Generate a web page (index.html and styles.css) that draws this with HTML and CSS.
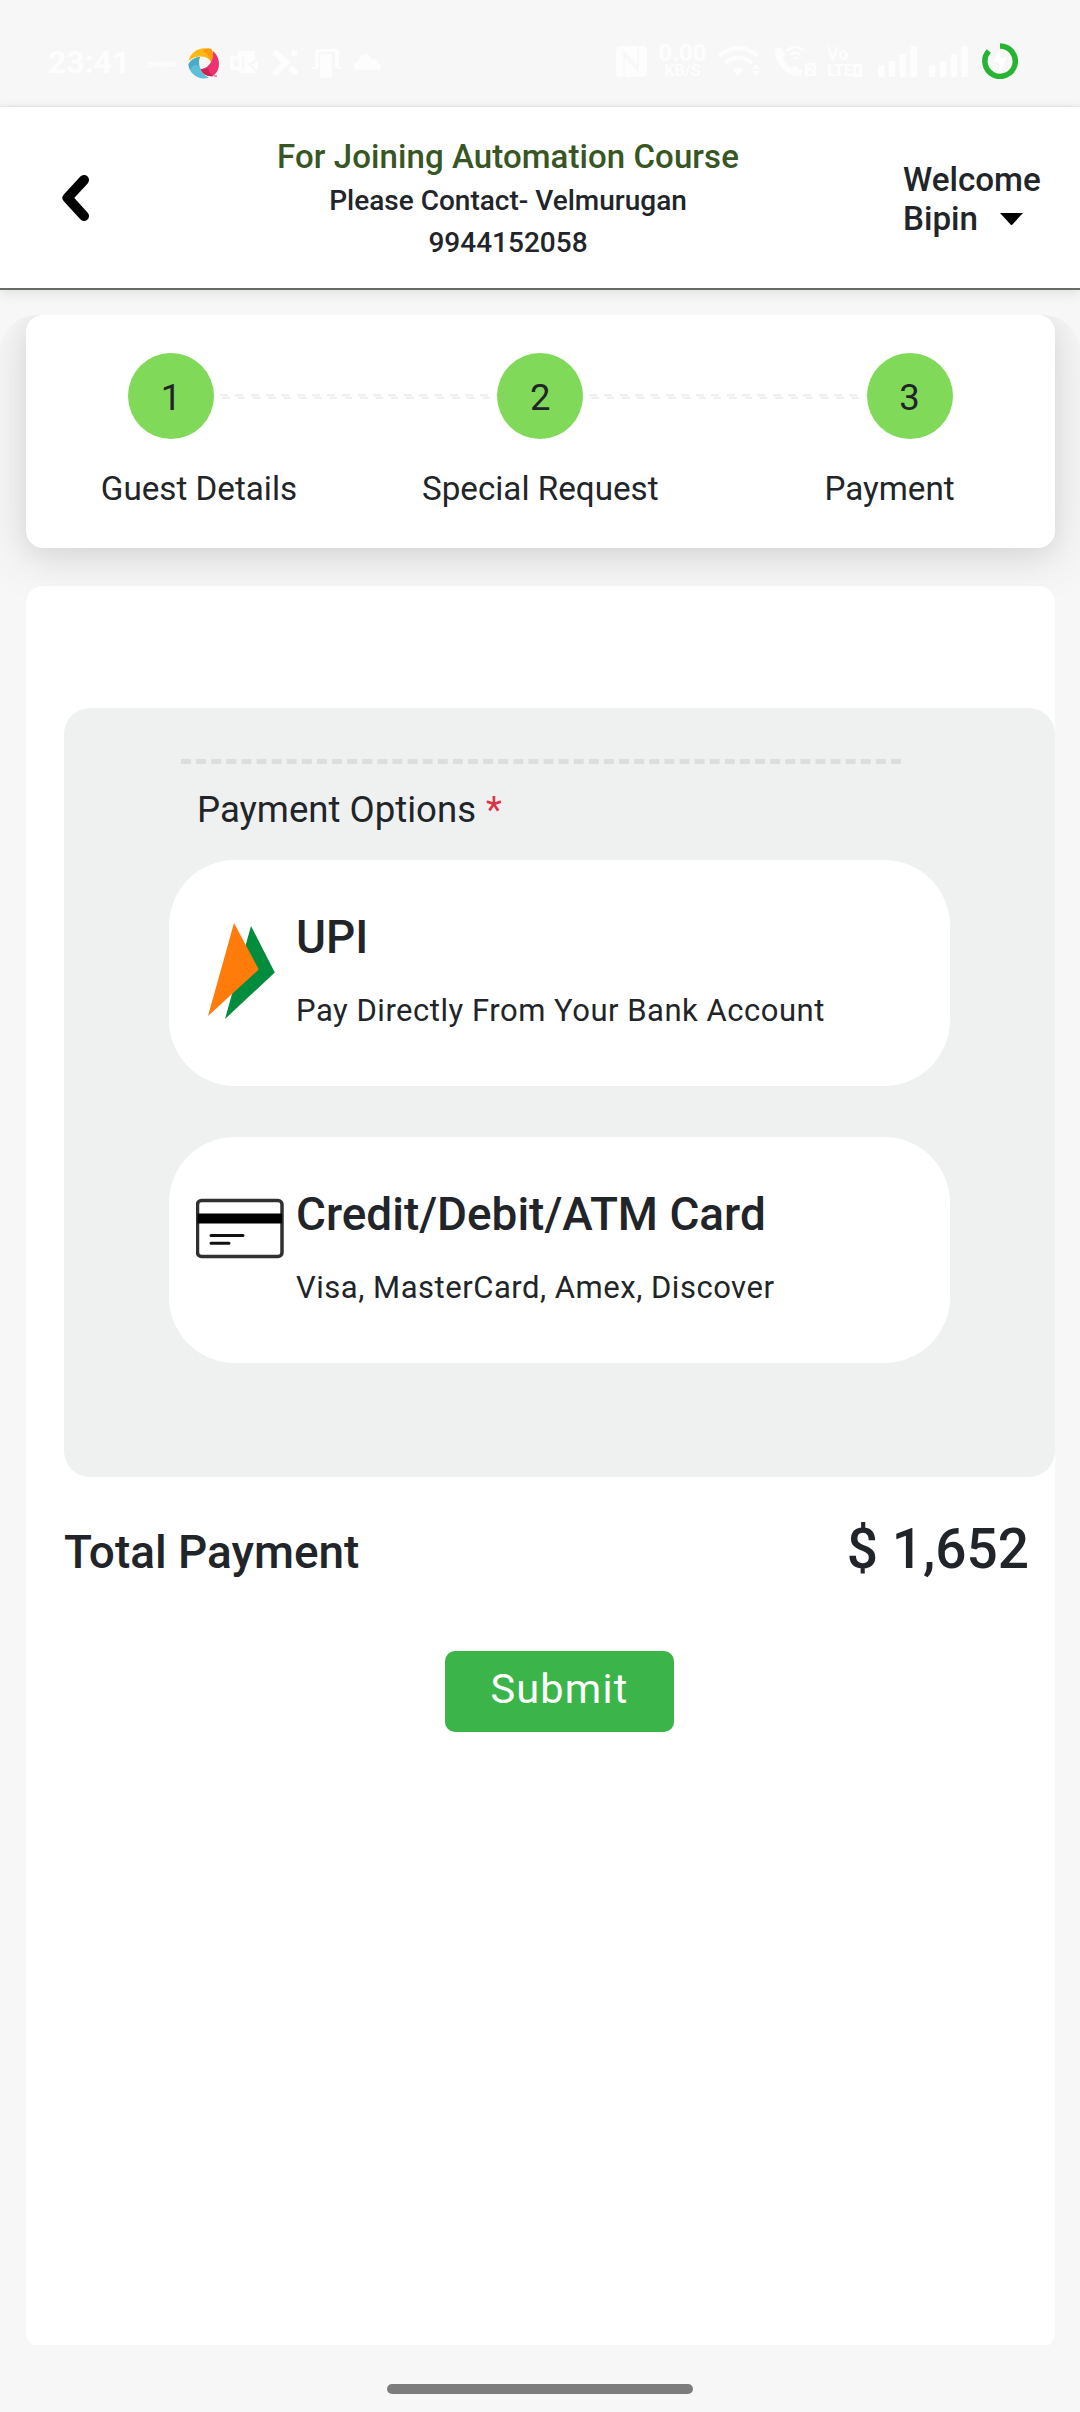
FILE: index.html
```html
<!DOCTYPE html>
<html lang="en">
<head>
<meta charset="utf-8">
<title>Payment</title>
<link rel="stylesheet" href="styles.css">
</head>
<body>
<div class="status-bar">
  <div class="status-left">
    <span class="clock">23:41</span>
    <span class="zomato">zomato</span>
    <svg class="swirl" width="32" height="32" viewBox="0 0 32 32">
      <path d="M0.5 14C3 4 12 -1 23 2C26 5 25 11 23 15C19 8 8 8 0.5 14Z" fill="#fdb913"/>
      <path d="M14 4C18 1 21 1 23 2C26 5 25 11 23 15C22 10 19 6 14 4Z" fill="#fd9a08"/>
      <path d="M25 4C33 11 33 23 25 29C20 30 14 27 12 22C20 22 26 14 25 4Z" fill="#ee3170"/>
      <path d="M12 22C16 23 19 22 20 21C21 25 23 28 25 29C20 30 14 27 12 22Z" fill="#cf1f4c"/>
      <path d="M12 10C9 18 14 28 21 30.500C11 34 1 27 0.500 17C4 12 8 10 12 10Z" fill="#5cbfd8"/>
      <path d="M12 10C10 13 10.500 18 11 20C7 16 4 19 2 23C1 21 0.500 19 0.500 17C4 12 8 10 12 10Z" fill="#49abc4"/>
      <path d="M26 29h3" stroke="#ee3170" stroke-width="1"/>
    </svg>
    <svg class="outlook" width="28" height="23" viewBox="0 0 28 23" fill="#fdfdfd">
      <path d="M8 0H25V9L18 13L27 22H10L8 19H14V5H8Z"/><path d="M28 10V20L21 14Z"/>
      <path fill-rule="evenodd" d="M0 5H12V19H0ZM6 8a3 4 0 1 0 .1 0Z"/>
    </svg>
    <svg class="cross" width="27" height="27" viewBox="0 0 27 27" stroke="#fdfdfd" stroke-width="6" stroke-linecap="round" fill="none">
      <path d="M4 4L14 13.500L4 23M20 20L23 23M22 4h.5"/>
    </svg>
    <svg class="device" width="30" height="29" viewBox="0 0 30 29" fill="#fdfdfd">
      <path d="M3 0H27V18H23V3H7V18H3ZM0 18H6V20H0ZM24 18H30V20H24Z"/><path d="M8 7a2 2 0 0 1 2-2H18a2 2 0 0 1 2 2V27a2 2 0 0 1-2 2H10a2 2 0 0 1-2-2Z"/>
    </svg>
    <svg class="cloud" width="28" height="16" viewBox="0 0 28 16" fill="#fdfdfd">
      <path d="M5 16C-1 16-1 8 5 8C6-1 16-2 19 5C23 4 25 7 24.500 9C29 10 29 16 25 16Z"/>
    </svg>
  </div>
  <div class="status-right">
    <svg class="nfc" width="31" height="31" viewBox="0 0 31 31">
      <rect width="31" height="31" rx="4" fill="#fdfdfd"/>
      <path d="M8 31V6L22 22V8M22 0V25L8 9" fill="none" stroke="#f7f7f7" stroke-width="1.500"/>
    </svg>
    <div class="speed"><span class="speed-value">0.00</span><span class="speed-unit">KB/S</span></div>
    <svg class="wifi" width="43" height="31" viewBox="0 0 43 31" fill="none" stroke="#fdfdfd" stroke-width="4">
      <path d="M1 10Q20-6 40 10M7 17Q20 6 34 17"/><path d="M14.500 24Q20 20 26 24L20 30Z" fill="#fdfdfd" stroke="none"/><path d="M34 23l4-5 4 5ZM34 25l4 5 4-5Z" fill="#fdfdfd" stroke="none"/>
    </svg>
    <svg class="call" width="41" height="31" viewBox="0 0 41 31" fill="none" stroke="#fdfdfd" stroke-width="2.500">
      <path d="M1 3L6 1L10 9L8 13Q11 19 16 22L20 20L28 25L25 30C12 31 0 17 0 5Z" fill="#fdfdfd" stroke="none"/>
      <path d="M12 5Q20-3 29 5M15.500 9Q20 4 25 9"/><path d="M17 11h7l-3.500 3Z" fill="#fdfdfd" stroke="none"/>
      <rect x="30" y="17" width="11" height="13" rx="2" fill="#fdfdfd" stroke="none"/>
      <path d="M33 21q3-2 5 0q0 2-4.500 6h5" stroke="#f7f7f7" stroke-width="1.500"/>
    </svg>
    <div class="volte"><span>Vo</span><span class="lte">LTE<i></i></span></div>
    <svg class="signal" width="39" height="31" viewBox="0 0 39 31" fill="#fdfdfd"><rect y="19" width="6.500" height="12" rx="1.500"/><rect x="10.800" y="15" width="6.500" height="16" rx="1.500"/><rect x="21.600" y="8" width="6.500" height="23" rx="1.500"/><rect x="32.400" width="6.500" height="31" rx="1.500"/></svg>
    <svg class="signal" width="39" height="31" viewBox="0 0 39 31" fill="#fdfdfd"><rect y="19" width="6.500" height="12" rx="1.500"/><rect x="10.800" y="15" width="6.500" height="16" rx="1.500"/><rect x="21.600" y="8" width="6.500" height="23" rx="1.500"/><rect x="32.400" width="6.500" height="31" rx="1.500"/></svg>
    <svg class="battery" width="36" height="36" viewBox="0 0 36 36">
      <path d="M18 3A15.200 15.200 0 1 1 6.800 8" fill="none" stroke="#25b433" stroke-width="5.500"/>
      <path d="M18 5L11.500 19H16.500L18 30L24.500 15H18Z" fill="#fff"/>
    </svg>
  </div>
</div>

<header class="header">
  <svg class="back" width="27" height="46" viewBox="0 0 27 46"><path d="M22 5L5.500 22.800L22 41" fill="none" stroke="#000" stroke-width="10" stroke-linecap="round" stroke-linejoin="round"/></svg>
  <div class="contact">
    <div class="contact-title">For Joining Automation Course</div>
    <div class="contact-line">Please Contact- Velmurugan</div>
    <div class="contact-line">9944152058</div>
  </div>
  <div class="user">
    <span>Welcome</span>
    <div class="user-name"><span>Bipin</span><svg width="23" height="12" viewBox="0 0 23 12"><path d="M0 0H23L11.500 12.500Z"/></svg></div>
  </div>
</header>

<main class="page">
  <section class="steps">
    <div class="step first"><div class="step-dot">1</div><div class="step-label">Guest Details</div></div>
    <div class="step-link"></div>
    <div class="step"><div class="step-dot">2</div><div class="step-label">Special Request</div></div>
    <div class="step-link"></div>
    <div class="step last"><div class="step-dot">3</div><div class="step-label">Payment</div></div>
  </section>

  <section class="content">
    <div class="panel">
      <svg class="rule" width="720" height="5"><path d="M0 2.500H720" stroke="#ddd" stroke-width="5" stroke-dasharray="10 5.106"/></svg>
      <div class="panel-title">Payment Options <span class="required">*</span></div>
      <div class="option">
        <svg class="option-icon" width="88" height="100" viewBox="0 0 88 100">
          <path d="M54 7L77.800 53.500L28 100Z" fill="#028c3e"/><path d="M37 4L61.800 50.500L11 97Z" fill="#ff7c0a"/>
        </svg>
        <div><div class="option-name">UPI</div><div class="option-note">Pay Directly From Your Bank Account</div></div>
      </div>
      <div class="option">
        <svg class="option-icon wide" width="88" height="100" viewBox="0 0 88 100">
          <rect x="1.500" y="4.500" width="84.500" height="56" rx="4" fill="#fff" stroke="#303030" stroke-width="3.500"/>
          <path d="M1.500 22.500H86" stroke="#000" stroke-width="10"/><path d="M15 39.500H47M15 47.200H33" stroke="#111" stroke-width="3" stroke-linecap="round"/>
        </svg>
        <div><div class="option-name">Credit/Debit/ATM Card</div><div class="option-note">Visa, MasterCard, Amex, Discover</div></div>
      </div>
    </div>
    <div class="total"><span class="total-label">Total Payment</span><span class="total-value">$ 1,652</span></div>
    <button class="submit">Submit</button>
  </section>
</main>
<div class="nav-bar"><div class="nav-handle"></div></div>
</body>
</html>
```
FILE: styles.css
```css
* { box-sizing: border-box; }
body {
  margin: 0;
  width: 1080px;
  height: 2412px;
  overflow: hidden;
  display: flex;
  flex-direction: column;
  background: #f7f7f7;
  color: #212529;
  font-family: Roboto, "Liberation Sans", sans-serif;
}
svg { display: block; flex: none; }

.status-bar {
  height: 107px;
  flex: none;
  display: flex;
  justify-content: space-between;
  padding: 0 62px 0 48px;
  color: #fdfdfd;
  box-shadow: inset 0 -3px 3px -2px rgba(0, 0, 0, .06);
}
.status-left, .status-right { display: flex; align-items: flex-start; }
.clock { font-size: 32px; font-weight: 700; line-height: 38px; padding-top: 43px; width: 100px; }
.zomato { font-size: 9px; font-weight: 900; font-style: italic; line-height: 12px; padding-top: 58px; width: 40px; }
.swirl { margin: 47px 10px 0 0; }
.outlook { margin: 51px 14px 0 0; }
.cross { margin: 49px 13px 0 0; }
.device { margin: 49px 11px 0 0; }
.cloud { margin-top: 54px; }
.nfc { margin: 46px 9px 0 0; }
.speed { display: flex; flex-direction: column; align-items: center; width: 53px; padding-top: 42px; margin-right: 9px; }
.speed-value { font-size: 24px; font-weight: 700; line-height: 22px; }
.speed-unit { font-size: 16px; font-weight: 700; line-height: 14px; }
.wifi { margin: 46px 14px 0 0; }
.call { margin: 46px 11px 0 0; }
.volte { display: flex; flex-direction: column; width: 40px; padding-top: 45px; margin-right: 11px; font-size: 18px; font-weight: 700; line-height: 17px; }
.lte { display: flex; align-items: center; font-size: 17px; letter-spacing: -.5px; }
.lte i { width: 9px; height: 13px; border: 3px solid #fdfdfd; }
.signal { margin: 46px 12px 0 0; }
.battery { margin: 43px 0 0 2px; }

.header {
  height: 183px;
  flex: none;
  display: flex;
  background: #fff;
  border-bottom: 2px solid #666b66;
  box-shadow: 0 3px 12px rgba(0, 0, 0, .1);
}
.back { margin: 68px 0 0 62px; }
.contact { flex: none; width: 840px; margin-left: -1px; padding-top: 30px; text-align: center; font-weight: 500; }
.contact-title { margin-bottom: 3px; font-size: 33px; line-height: 40px; letter-spacing: .08px; color: #375623; }
.contact-line { font-size: 28px; line-height: 42px; }
.user { font-size: 33.200px; font-weight: 500; line-height: 39px; padding-top: 53px; margin-left: -25px; flex: none; }
.user-name { display: flex; align-items: center; }
.user-name svg { margin-left: 22px; }

.page {
  margin-top: 25px;
  height: 2030px;
  flex: none;
  padding: 0 25px 0 26px;
  border-radius: 37px 37px 0 0;
  overflow: hidden;
}
.steps {
  height: 233px;
  display: flex;
  justify-content: space-between;
  padding: 38px 102.500px 0 102px;
  border-radius: 17px;
  background: #fff;
  box-shadow: 0 6px 22px rgba(0, 0, 0, .05), 0 8px 50px 6px rgba(0, 0, 0, .1);
}
.step { width: 86px; display: flex; flex-direction: column; align-items: center; flex: none; }
.step-dot { width: 86px; height: 86px; padding-top: 4px; border-radius: 50%; background: #81d959; display: grid; place-items: center; font-size: 36.500px; line-height: 42px; }
.step-label { margin-top: 30px; font-size: 33.200px; line-height: 40px; white-space: nowrap; }
.first .step-label { margin-right: -56px; }
.last .step-label { margin-left: -40px; }
.step-link {
  flex: 1;
  height: 5px;
  margin: 41px 0 0 6px;
  background:
    repeating-linear-gradient(90deg, #eff1f0 0 8px, transparent 8px 15.310px) 0 0 / 100% 2.500px no-repeat,
    repeating-linear-gradient(90deg, transparent 0 2.500px, #eff1f0 2.500px 10px, transparent 10px 15.310px) 0 100% / 100% 2.500px no-repeat;
}
.content {
  margin-top: 38px;
  height: 1763px;
  padding: 122px 0 0 38px;
  border-radius: 17px;
  background: #fff;
  position: relative;
}
.panel { height: 769px; padding: 51px 105px 0; border-radius: 26px; background: #eff1f0; }
.rule { margin-left: 12px; }
.panel-title { margin: 24px 0 0 28px; font-size: 36.600px; line-height: 44px; height: 72px; }
.required { margin-left: 1px; color: #dc3545; }
.option { height: 226px; display: flex; padding: 59px 0 0 28px; margin-bottom: 51px; border-radius: 66px; background: #fff; }
.option-icon { margin-right: 11px; }
.option-icon.wide { margin: 0 12px 0 -1px; }
.option-name { font-size: 45.900px; font-weight: 500; line-height: 54px; margin-top: -9px; }
.option-note { font-size: 31px; line-height: 36px; letter-spacing: .52px; margin-top: 29px; }
.total { display: flex; justify-content: space-between; align-items: baseline; padding: 39px 26px 0 0; font-weight: 500; height: 174px; }
.total-label { font-size: 45.900px; line-height: 54px; }
.total-value { font-size: 55px; line-height: 66px; }
.submit { display: block; margin: 0 auto; width: 229px; height: 81px; padding: 0 0 6px; border: 0; border-radius: 10px; background: #3bb54a; color: #fff; font: 400 41.500px/48px Roboto, "Liberation Sans", sans-serif; letter-spacing: 1.200px; }
.nav-bar { height: 67px; flex: none; display: flex; justify-content: center; padding-top: 39px; background: #f7f7f7; }
.nav-handle { width: 306px; height: 10px; border-radius: 5px; background: #7c7c7c; }
```
